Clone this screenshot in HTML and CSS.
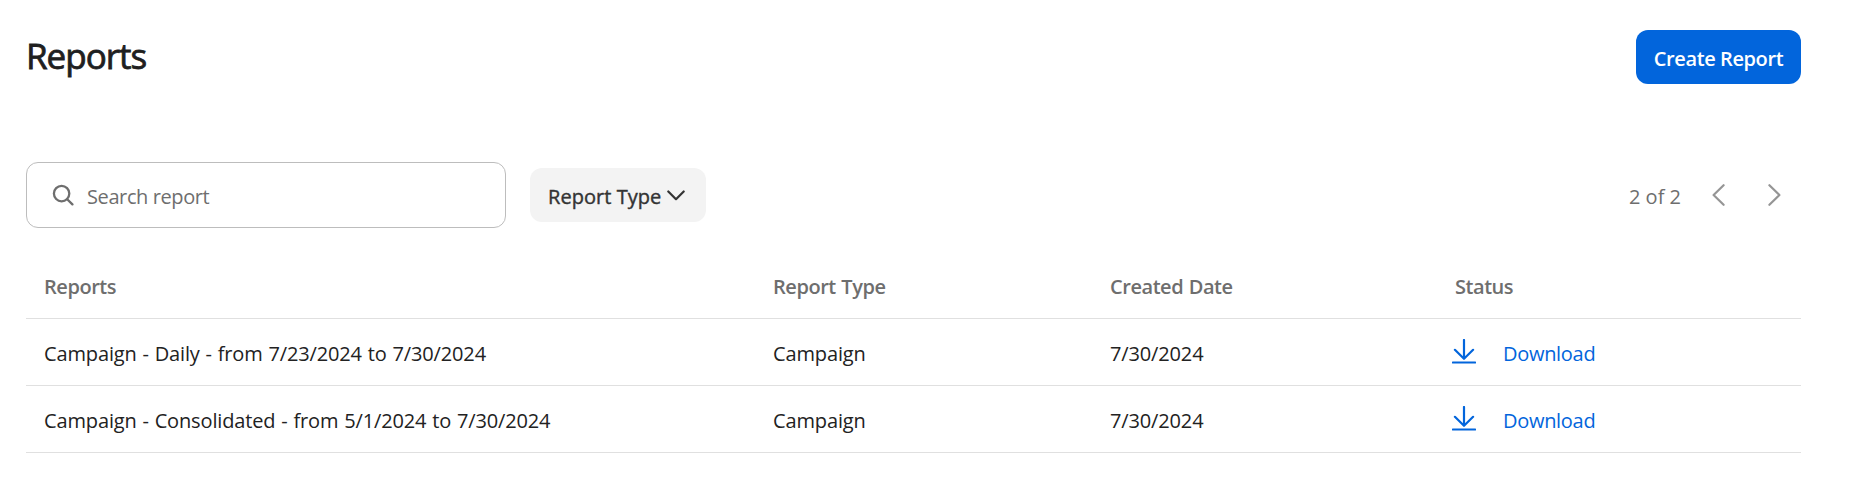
FILE: index.html
```html
<!DOCTYPE html>
<html lang="en">
<head>
<meta charset="utf-8">
<title>Reports</title>
<link rel="stylesheet" href="styles.css">
</head>
<body>
<main class="page">
  <header class="page-header">
    <h1 class="title"><span>Reports</span></h1>
    <button class="create"><span>Create Report</span></button>
  </header>
  <div class="toolbar">
    <div class="search">
      <svg class="search-icon" width="22" height="22" viewBox="0 0 22 22"><circle cx="9.6" cy="9.6" r="7.7"/><path d="M15.2 15.2L20.4 20.4"/></svg>
      <span class="placeholder">Search report</span>
    </div>
    <button class="filter"><span>Report Type</span><svg class="caret" width="18" height="11" viewBox="0 0 18 11"><path d="M1.3 1.5L9 9.2L16.7 1.5"/></svg></button>
    <div class="pager">
      <span class="count">2 of 2</span>
      <svg class="arrow" width="13" height="22" viewBox="0 0 13 22"><path d="M11.6 1.2L1.6 11L11.6 20.8"/></svg>
      <svg class="arrow next" width="13" height="22" viewBox="0 0 13 22"><path d="M1.4 1.2L11.4 11L1.4 20.8"/></svg>
    </div>
  </div>
  <div class="table">
    <div class="row head"><span>Reports</span><span>Report Type</span><span>Created Date</span><span>Status</span></div>
    <div class="row">
      <span>Campaign - Daily - from 7/23/2024 to 7/30/2024</span><span>Campaign</span><span>7/30/2024</span>
      <a class="download"><svg width="24" height="26" viewBox="0 0 24 26"><path d="M12 1V19.5M2.9 10.8L12 19.8L21.1 10.8M.9 23.5H23.1"/></svg><span>Download</span></a>
    </div>
    <div class="row">
      <span>Campaign - Consolidated - from 5/1/2024 to 7/30/2024</span><span>Campaign</span><span>7/30/2024</span>
      <a class="download"><svg width="24" height="26" viewBox="0 0 24 26"><path d="M12 1V19.5M2.9 10.8L12 19.8L21.1 10.8M.9 23.5H23.1"/></svg><span>Download</span></a>
    </div>
  </div>
</main>
</body>
</html>
```
FILE: styles.css
```css
* { box-sizing: border-box; }
body { margin: 0; background: #fff; color: #222; font: 400 20px/30px "Open Sans", sans-serif; }
svg { fill: none; stroke: currentColor; stroke-width: 2; stroke-linecap: round; stroke-linejoin: round; flex: none; }
button { border: 0; font: inherit; }
.page { padding: 30px 48px 0 26px; }
.page-header { display: flex; justify-content: space-between; align-items: flex-start; height: 132px; }
.title { margin: 0; font-size: 35px; line-height: 52px; font-weight: 400; color: #1f1f1f; letter-spacing: -1px; -webkit-text-stroke: .8px #1f1f1f; }
.create { width: 165px; height: 54px; border-radius: 12px; background: #0265dc; color: #fff; font-weight: 600; letter-spacing: -.4px; padding: 4px 0 0; white-space: nowrap; }
.toolbar { display: flex; align-items: center; height: 66px; }
.search { display: flex; align-items: center; width: 480px; height: 66px; border: 1px solid #bdbdbd; border-radius: 12px; padding-left: 25px; color: #6e6e6e; }
.search-icon { stroke-width: 2.3; }
.placeholder { margin-left: 13px; padding-top: 3px; letter-spacing: -.4px; }
.filter { display: flex; align-items: center; width: 176px; height: 54px; margin-left: 24px; padding: 3px 0 0 18px; border-radius: 12px; background: #f3f3f3; color: #333; letter-spacing: .05px; -webkit-text-stroke: .4px #333; white-space: nowrap; }
.caret { margin: -2px 0 0 6px; stroke-width: 2.2; }
.pager { display: flex; align-items: center; margin-left: auto; padding-right: 20px; color: #6e6e6e; }
.count { padding-top: 3px; }
.arrow { color: #959595; margin: -1px 0 0 31px; stroke-width: 2.2; }
.next { margin-left: 43px; }
.table { margin-top: 24px; }
.row { display: grid; grid-template-columns: 729px 337px 345px 1fr; align-items: center; height: 67px; padding: 3px 0 0 18px; border-bottom: 1px solid #e0e0e0; letter-spacing: -.14px; word-spacing: .8px; white-space: nowrap; }
.head { color: #6e6e6e; font-weight: 600; letter-spacing: -.45px; }
.download { display: flex; align-items: center; color: #0265dc; margin-left: -3px; letter-spacing: -.3px; }
.download svg { margin-top: -4px; stroke-width: 2.2; }
.download span { margin-left: 27px; }
```
